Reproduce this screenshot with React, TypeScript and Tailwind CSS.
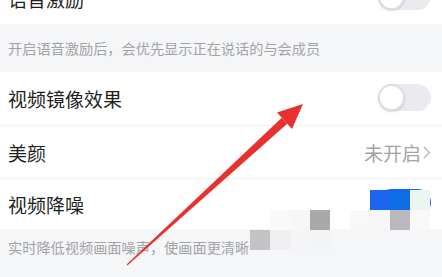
import React from "react";

const font = { fontFamily: '"Noto Sans CJK SC", "Noto Sans", sans-serif' };

function Toggle({ on = false }: { on?: boolean }) {
  if (on) {
    return (
      <div className="relative h-[27px] w-[53px] rounded-full bg-[#1a6cf0]">
        <div className="absolute right-[1px] top-[1px] h-[25px] w-[25px] rounded-full bg-white" />
      </div>
    );
  }
  return (
    <div className="relative h-[27px] w-[53px] rounded-full bg-[#ebebef]">
      <div className="absolute left-0 top-0 h-[27px] w-[27px] rounded-full border-2 border-[#dedee2] bg-white shadow-[0_1px_2px_rgba(0,0,0,0.15)]" />
    </div>
  );
}

function Row({
  title,
  children,
  className,
}: {
  title: string;
  children?: React.ReactNode;
  className: string;
}) {
  return (
    <div className={`flex items-center justify-between pl-[8px] pr-[11px] ${className}`}>
      <span className="text-[19px] leading-none text-[#1f1f1f]">{title}</span>
      {children}
    </div>
  );
}

// mosaic blocks over the lower right corner
const cells = [
  "left-[370px] top-[190px] bg-[#1b65ef]",
  "left-[390px] top-[190px] bg-[#0c6de6]",
  "left-[410px] top-[190px] bg-[#ecf6f1]",
  "left-[270px] top-[210px] bg-[#f9f9f9]",
  "left-[290px] top-[210px] bg-[#f7f7f8]",
  "left-[310px] top-[210px] bg-[#a9a9a9]",
  "left-[350px] top-[210px] bg-[#f8f8f9]",
  "left-[370px] top-[210px] bg-[#f7f7f8]",
  "left-[390px] top-[210px] bg-[#bab7bf]",
  "left-[410px] top-[210px] bg-[#f9f9fa]",
  "left-[250px] top-[230px] bg-[#c3c3c5]",
  "left-[270px] top-[230px] bg-[#efeff1]",
  "left-[290px] top-[230px] bg-[#f4f5f7]",
  "left-[310px] top-[230px] bg-[#f3f4f6]",
];

export default function App() {
  return (
    <div className="relative h-[277px] w-[442px] overflow-hidden bg-white" style={font}>
      <div className="mt-[-27px] flex flex-col">
        <Row title="语音激励" className="h-[51px]">
          <div className="-mt-[5px]">
            <Toggle />
          </div>
        </Row>
        <div className="flex h-[48px] items-center bg-[#f5f6f8] pl-[8px] text-[14.2px] leading-none text-[#a3a3a6]">
          开启语音激励后，会优先显示正在说话的与会成员
        </div>
        <Row title="视频镜像效果" className="h-[54px] border-b border-[#f2f2f4]">
          <div className="-mt-[3px]">
            <Toggle />
          </div>
        </Row>
        <Row title="美颜" className="h-[53px] border-b border-[#f2f2f4]">
          <div className="flex items-center gap-[2px] text-[19px] leading-none text-[#a3a3a6]">
            <span>未开启</span>
            <svg width="8" height="13" viewBox="0 0 8 13" fill="none">
              <path d="M1 1l5.5 5.5L1 12" stroke="#b0b0b4" strokeWidth="1.2" />
            </svg>
          </div>
        </Row>
        <Row title="视频降噪" className="h-[50px]">
          <div className="-mt-[4px]">
            <Toggle on />
          </div>
        </Row>
        <div className="h-[60px] bg-[#f5f6f8] pl-[8px] pt-[9px] text-[14.2px] leading-[18px] text-[#a3a3a6]">
          实时降低视频画面噪声，使画面更清晰
        </div>
      </div>

      {cells.map((c) => (
        <div key={c} className={`absolute h-[20px] w-[20px] ${c}`} />
      ))}

      <svg className="pointer-events-none absolute inset-0" width="442" height="277" viewBox="0 0 442 277">
        <polygon
          points="126.6,264.6 127.4,265.4 287.2,123.8 281.8,117.8"
          fill="#e8312e"
        />
        <polygon points="303,104 277,112.5 292,129" fill="#e8312e" />
      </svg>
    </div>
  );
}
